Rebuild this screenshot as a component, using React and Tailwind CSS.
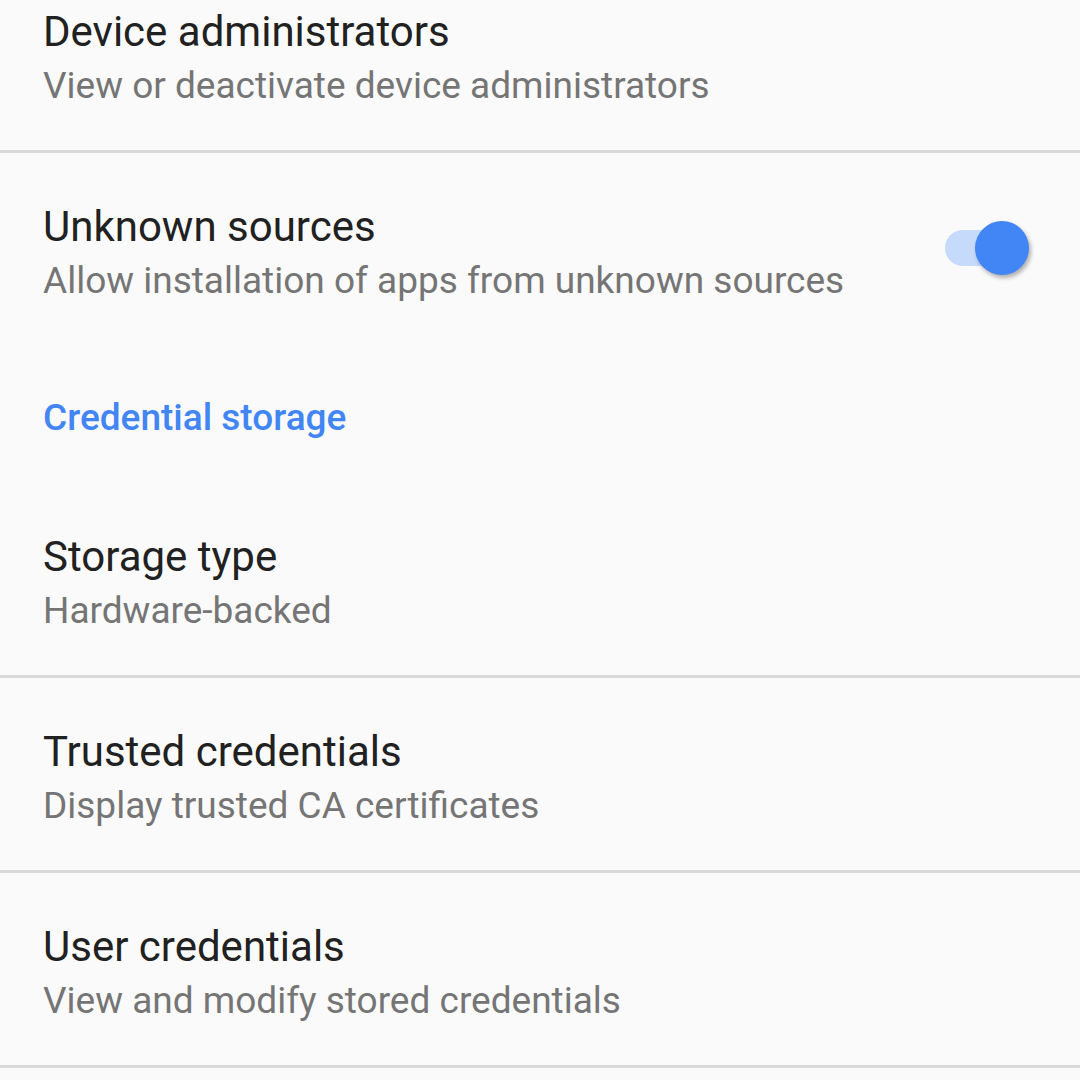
const font = { fontFamily: 'Roboto, "Noto Sans", sans-serif' };

function Divider() {
  return <div className="h-[3px] w-full bg-[#d9d9d9]" />;
}

function Row({ title, summary, children }) {
  return (
    <div className="flex h-[192px] items-start justify-between pl-[43px] pr-[51px] pt-[48px]">
      <div className="flex flex-col">
        <div className="text-[42px] leading-[52px] text-[#212121]">{title}</div>
        <div className="mt-1 text-[37px] leading-[48px] text-[#757575]">{summary}</div>
      </div>
      {children}
    </div>
  );
}

function Toggle() {
  return (
    <div className="relative mt-[20px] h-[54px] w-[84px] shrink-0">
      <div className="absolute left-0 top-[9px] h-[36px] w-[66px] rounded-full bg-[#c6dafc]" />
      <div className="absolute right-0 top-0 h-[54px] w-[54px] rounded-full bg-[#4285f4] shadow-[2px_3px_4px_rgba(0,0,0,0.3)]" />
    </div>
  );
}

export default function App() {
  return (
    <div className="h-[1080px] w-[1080px] overflow-hidden bg-[#fafafa]" style={font}>
      <div className="-mt-[42px] flex flex-col">
        <Row title="Device administrators" summary="View or deactivate device administrators" />
        <Divider />
        <Row title="Unknown sources" summary="Allow installation of apps from unknown sources">
          <Toggle />
        </Row>
        <div className="h-[138px] pl-[43px] pt-[49px] text-[37px] font-medium leading-[48px] text-[#4285f4]">
          Credential storage
        </div>
        <Row title="Storage type" summary="Hardware-backed" />
        <Divider />
        <Row title="Trusted credentials" summary="Display trusted CA certificates" />
        <Divider />
        <Row title="User credentials" summary="View and modify stored credentials" />
        <Divider />
      </div>
    </div>
  );
}
